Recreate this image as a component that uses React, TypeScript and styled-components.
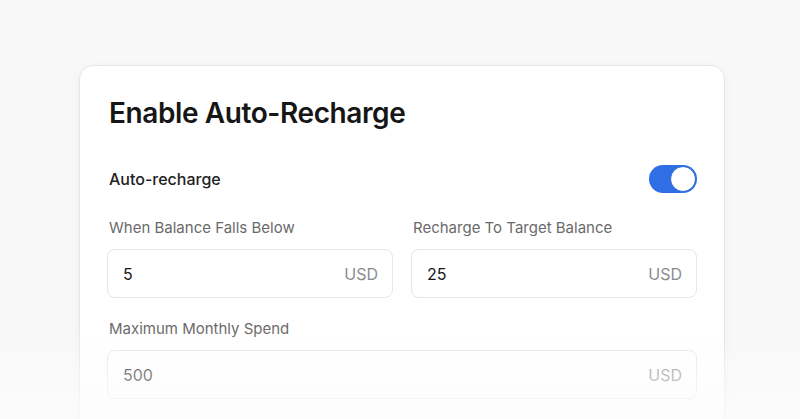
import React, { useState } from 'react';
import styled, { createGlobalStyle } from 'styled-components';

/*----------- Styles ----------- */
const GlobalStyle = createGlobalStyle`
  html, body {
    margin: 0;
    padding: 0;
    background: #f8f8f8;
    font-family: Inter, "Noto Sans", sans-serif;
    -webkit-font-smoothing: antialiased;
  }
`;

const Page = styled.div`
  position: relative;
  height: 419px;
  overflow: hidden;
  padding: 65px 0 0 79px;
  box-sizing: border-box;
`;

const Card = styled.div`
  width: 646px;
  box-sizing: border-box;
  background: #fff;
  border: 1px solid #e6e6e6;
  border-radius: 14px;
  box-shadow: 0 2px 10px rgba(0, 0, 0, 0.04);
  padding: 30px 27px 40px 27px;
  display: flex;
  flex-direction: column;
`;

const Title = styled.h1`
  margin: 0;
  font-size: 28px;
  line-height: 34px;
  font-weight: 600;
  letter-spacing: -0.4px;
  color: #161616;
  padding-left: 2px;
`;

const ToggleRow = styled.div`
  display: flex;
  justify-content: space-between;
  align-items: center;
  margin-top: 35px;
  height: 28px;
  padding-left: 2px;
`;

const RowLabel = styled.span`
  font-size: 16px;
  font-weight: 500;
  color: #222;
`;

const Switch = styled.button<{ $on: boolean }>`
  position: relative;
  width: 48px;
  height: 28px;
  border-radius: 14px;
  border: none;
  padding: 0;
  cursor: pointer;
  background: ${(p) => (p.$on ? '#2f6ee5' : '#d4d4d4')};

  &::after {
    content: '';
    position: absolute;
    top: 1px;
    left: ${(p) => (p.$on ? '21px' : '1px')};
    width: 24px;
    height: 24px;
    border-radius: 50%;
    background: #fff;
    border: 1px solid ${(p) => (p.$on ? '#2a64d2' : '#c4c4c4')};
  }
`;

const Grid = styled.div`
  display: grid;
  grid-template-columns: minmax(0, 1fr) minmax(0, 1fr);
  column-gap: 18px;
  margin-top: 25px;
`;

const Field = styled.div<{ $wide?: boolean }>`
  display: flex;
  flex-direction: column;
  gap: 11px;
  min-width: 0;
  margin-top: ${(p) => (p.$wide ? '21px' : '0')};
`;

const FieldLabel = styled.label`
  font-size: 15px;
  line-height: 20px;
  color: #6a6a6a;
  padding-left: 2px;
`;

const InputBox = styled.div`
  display: flex;
  align-items: center;
  height: 49px;
  box-sizing: border-box;
  border: 1px solid #e6e6e6;
  border-radius: 8px;
  padding: 0 14px 0 15px;
  background: #fff;
`;

const Value = styled.input`
  flex: 1;
  width: 0;
  min-width: 0;
  border: none;
  outline: none;
  padding: 0;
  background: transparent;
  font-family: inherit;
  font-size: 16px;
  color: #161616;
`;

const Unit = styled.span`
  font-size: 16px;
  color: #8c8c8c;
`;

const Fade = styled.div`
  position: absolute;
  left: 0;
  right: 0;
  bottom: 0;
  height: 90px;
  pointer-events: none;
  background: linear-gradient(
    to bottom,
    rgba(252, 252, 252, 0) 0%,
    rgba(252, 252, 252, 0.45) 50%,
    rgba(252, 252, 252, 0.8) 100%
  );
`;

type AmountProps = { label: string; value: string; wide?: boolean };

const AmountField: React.FC<AmountProps> = ({ label, value, wide }) => {
  const [val, setVal] = useState(value);
  return (
    <Field $wide={wide}>
      <FieldLabel>{label}</FieldLabel>
      <InputBox>
        <Value value={val} onChange={(e) => setVal(e.target.value)} />
        <Unit>USD</Unit>
      </InputBox>
    </Field>
  );
};

export default function App() {
  const [on, setOn] = useState(true);

  return (
    <>
      <GlobalStyle />
      <Page>
        <Card>
          <Title>Enable Auto-Recharge</Title>
          <ToggleRow>
            <RowLabel>Auto-recharge</RowLabel>
            <Switch $on={on} onClick={() => setOn(!on)} aria-label="Auto-recharge" />
          </ToggleRow>
          <Grid>
            <AmountField label="When Balance Falls Below" value="5" />
            <AmountField label="Recharge To Target Balance" value="25" />
          </Grid>
          <AmountField label="Maximum Monthly Spend" value="500" wide />
        </Card>
        <Fade />
      </Page>
    </>
  );
}
